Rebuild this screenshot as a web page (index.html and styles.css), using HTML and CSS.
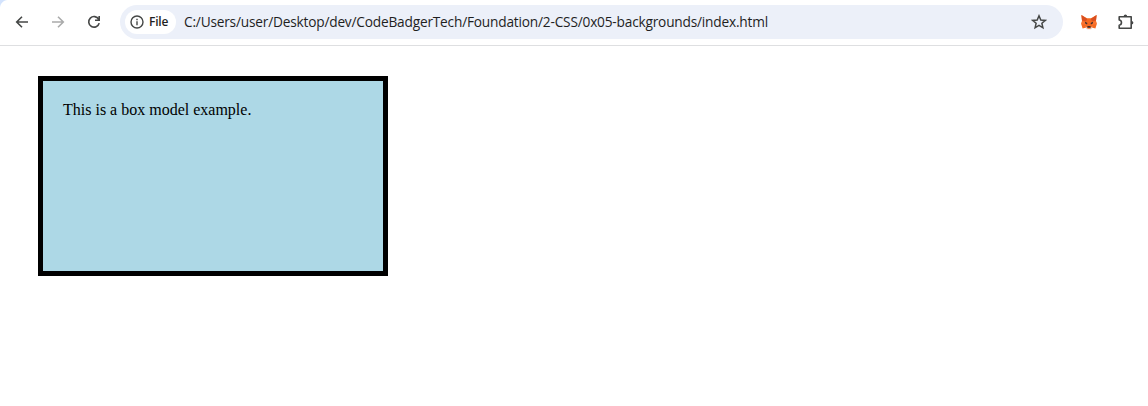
FILE: index.html
```html
<!DOCTYPE html>
<html lang="en">
<head>
<meta charset="utf-8">
<title>Box model</title>
<link rel="stylesheet" href="styles.css">
</head>
<body>
<header class="toolbar">
  <nav class="nav">
    <svg class="icon" viewBox="0 0 16 16"><path d="M14 8H3M8 2.7L2.7 8L8 13.3"/></svg>
    <svg class="icon icon-off" viewBox="0 0 16 16"><path d="M2 8H13M8 2.7L13.3 8L8 13.3"/></svg>
    <svg class="icon" viewBox="0 0 16 16"><path d="M12.7 5.3A5.3 5.3 0 1 0 13.2 9.1M13.2 2V6.2H9"/></svg>
  </nav>
  <div class="omnibox">
    <div class="chip">
      <svg class="info" viewBox="0 0 14 14"><circle cx="7" cy="7" r="6"/><path d="M7 6.3V10.2M7 3.8V5.2"/></svg>
      <span class="chip-label">File</span>
    </div>
    <span class="url">C:/Users/user/Desktop/dev/CodeBadgerTech/Foundation/2-CSS/0x05-backgrounds/index.html</span>
    <svg class="star" viewBox="0 0 16 16"><path d="M8 1.8L9.8 6L14.3 6.4L10.9 9.3L11.9 13.8L8 11.4L4.1 13.8L5.1 9.3L1.7 6.4L6.2 6Z"/></svg>
  </div>
  <svg class="fox" viewBox="0 0 16 16">
    <path fill="#f5691f" d="M.4 1L6 4.3H10L15.6 1L15 7L15.8 10L14.4 14.4L10.6 13.5L9.5 14.8H6.5L5.4 13.5L1.6 14.4L.2 10L1 7Z"/>
    <path fill="#d94f20" d="M.4 1L6.2 5L5 7.3L1 6.5ZM15.6 1L9.8 5L11 7.3L15 6.5Z"/>
    <path fill="#fa7430" d="M1 7.2L4.5 7.5L6 11L.3 10ZM15 7.2L11.5 7.5L10 11L15.7 10Z"/>
    <path fill="#42302f" d="M3.8 7.6L6.4 8.9L6 10.4L4.4 9.7ZM12.2 7.6L9.6 8.9L10 10.4L11.6 9.7ZM6.4 12H9.6V13.8H6.4Z"/>
    <path fill="#d8c7bd" d="M4.4 12.2L6.3 13.8V15H9.7V13.8L11.6 12.2L10.2 15.3H5.8Z"/>
  </svg>
  <svg class="puzzle" viewBox="0 0 18 18"><path d="M2.2 3.8H14.2V15.3H2.2V12.2C5.2 12 5.2 7.2 2.2 7Z"/><path class="tab" d="M6.6 3.4A1.8 1.8 0 0 1 10.2 3.4ZM14.6 8A1.8 1.8 0 0 1 14.6 11.6Z"/></svg>
</header>
<main class="page">
  <div class="box">This is a box model example.</div>
</main>
</body>
</html>
```
FILE: styles.css
```css
* { box-sizing: border-box; }
body { margin: 0; background: #fff; }
.toolbar {
  display: flex;
  align-items: center;
  height: 46px;
  padding: 0 13px 2px 14px;
  border-bottom: 1px solid #dedfe1;
  background: radial-gradient(circle at 8px 8px, #fff 7.5px, transparent 8.5px) 0 0 / 8px 8px no-repeat, linear-gradient(#d3e3fd, #d3e3fd) 0 0 / 8px 8px no-repeat, #fff;
  font-family: "Open Sans", "Noto Sans", sans-serif;
  color: #1f1f1f;
}
.nav { display: flex; gap: 20px; width: 106px; flex: none; }
.icon, .info, .star, .puzzle { fill: none; stroke: #454746; stroke-width: 1.6; flex: none; }
.icon { width: 16px; height: 16px; }
.icon-off { stroke: #aaabab; }
.omnibox {
  display: flex;
  align-items: center;
  width: 943px;
  height: 34px;
  flex: none;
  padding: 0 16px 0 5px;
  border-radius: 17px;
  background: #ecf0f9;
}
.chip {
  display: flex;
  align-items: center;
  gap: 5px;
  width: 51px;
  height: 24px;
  padding-left: 5px;
  border-radius: 12px;
  background: #fff;
}
.info { width: 14px; height: 14px; stroke-width: 1.4; }
.chip-label { font-size: 12px; font-weight: 600; line-height: 24px; letter-spacing: -0.2px; }
.url { margin-left: 8px; font-size: 13.7px; line-height: 20px; white-space: nowrap; letter-spacing: -0.2px; }
.star { width: 16px; height: 16px; margin-left: auto; stroke-width: 1.5; }
.fox { width: 16px; height: 16px; margin-left: 18px; flex: none; }
.puzzle { width: 18px; height: 18px; margin-left: auto; stroke-width: 1.6; stroke-linejoin: round; }
.tab { fill: #454746; stroke: none; }
.page { padding: 30px 38px; }
.box {
  width: 350px;
  height: 200px;
  padding: 20px;
  border: 5px solid #000;
  background: #add8e6;
  color: #000;
  font: 16px/18px "Liberation Serif", "Times New Roman", serif;
}
```
